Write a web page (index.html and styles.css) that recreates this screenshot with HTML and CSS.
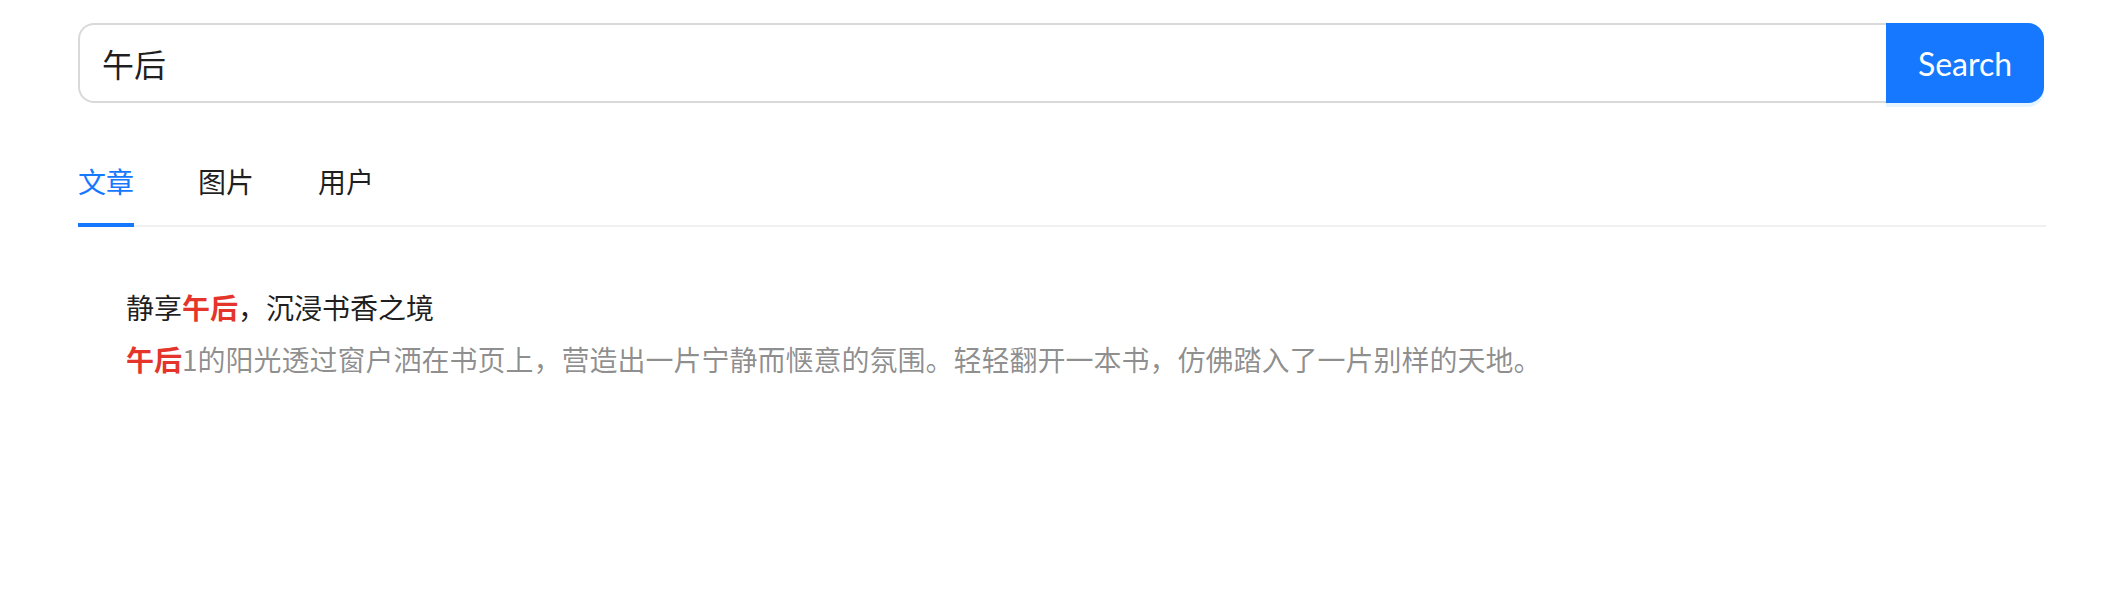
FILE: index.html
```html
<!DOCTYPE html>
<html lang="zh-CN">
<head>
<meta charset="utf-8">
<link rel="stylesheet" href="styles.css">
</head>
<body>
<div class="page">
  <div class="search">
    <div class="search-input">午后</div>
    <button class="search-btn">Search</button>
  </div>
  <div class="tabs">
    <div class="tab active">文章</div>
    <div class="tab">图片</div>
    <div class="tab">用户</div>
  </div>
  <div class="list">
    <div class="item">
      <div class="title">静享<em class="hl">午后</em>，沉浸书香之境</div>
      <div class="desc"><em class="hl">午后</em>1的阳光透过窗户洒在书页上，营造出一片宁静而惬意的氛围。轻轻翻开一本书，仿佛踏入了一片别样的天地。</div>
    </div>
  </div>
</div>
</body>
</html>
```
FILE: styles.css
```css
html, body {
  margin: 0;
  padding: 0;
  background: #fff;
}
body {
  font-family: "Noto Sans CJK SC", "Noto Sans", sans-serif;
  color: rgba(0, 0, 0, 0.88);
}
.page {
  width: 1968px;
  margin: 23px 0 0 78px;
}
.search {
  display: flex;
  height: 80px;
  width: 1966px;
  margin-bottom: 32px;
}
.search-input {
  flex: 1;
  box-sizing: border-box;
  border: 2px solid #d9d9d9;
  border-right: none;
  border-radius: 16px 0 0 16px;
  padding: 0 22px;
  font-size: 32px;
  line-height: 76px;
  color: rgba(0, 0, 0, 0.88);
}
.search-btn {
  width: 158px;
  height: 80px;
  border: none;
  border-radius: 0 16px 16px 0;
  background: #1677ff;
  color: #fff;
  font-family: "Lato", "Open Sans", sans-serif;
  font-size: 32px;
  padding: 0;
  box-shadow: 0 4px 0 rgba(5, 145, 255, 0.1);
}
.tabs {
  display: flex;
  gap: 64px;
  border-bottom: 2px solid #f0f0f0;
  margin-bottom: 34px;
}
.tab {
  font-size: 28px;
  line-height: 44px;
  padding: 24px 0 22px;
  position: relative;
  color: rgba(0, 0, 0, 0.88);
}
.tab.active {
  color: #1677ff;
}
.tab.active::after {
  content: "";
  position: absolute;
  left: 0;
  right: 0;
  bottom: -2px;
  height: 4px;
  background: #1677ff;
}
.item {
  padding: 24px 48px;
}
.title {
  font-size: 28px;
  line-height: 44px;
  margin-bottom: 8px;
  color: rgba(0, 0, 0, 0.88);
}
.desc {
  font-size: 28px;
  line-height: 44px;
  color: rgba(0, 0, 0, 0.45);
}
.hl {
  font-style: normal;
  font-weight: bold;
  color: #e5352b;
}
```
